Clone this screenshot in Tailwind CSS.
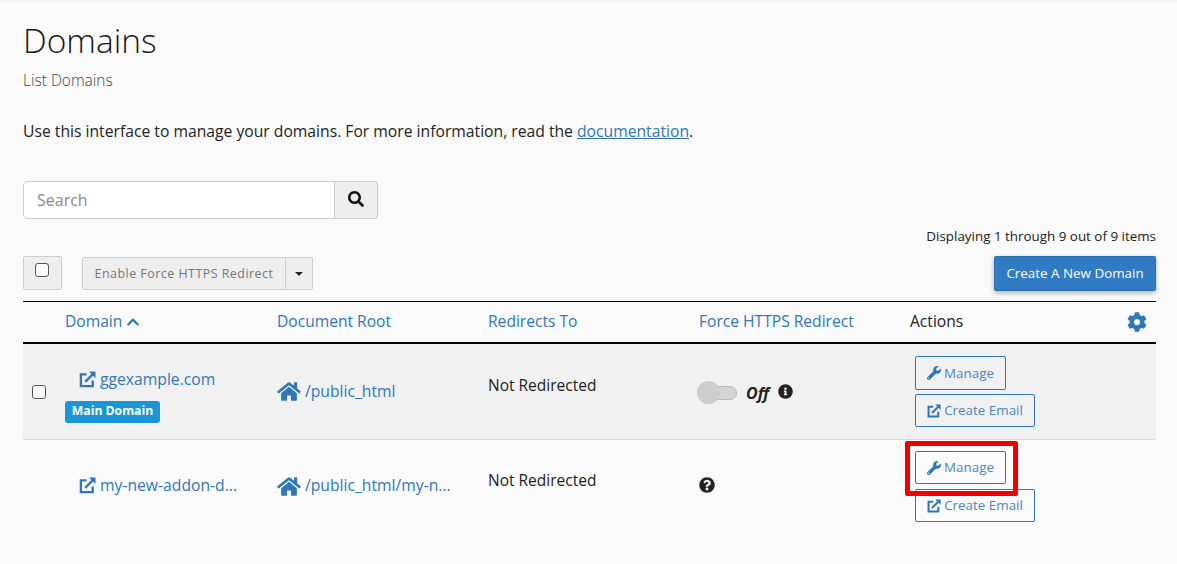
<!DOCTYPE html>
<html lang="en">
<head>
  <meta charset="UTF-8" />
  <title>Domains</title>
  <script src="https://cdn.jsdelivr.net/npm/@tailwindcss/browser@4"></script>
</head>
<body class="bg-[#fafafa] text-[#1f1f1f] font-['Open_Sans',sans-serif] overflow-hidden">
  <div class="h-[564px] w-[1177px] border-t-2 border-[#f3f3f3] pl-[23px] pr-[21px] relative">
    <!-- Page header -->
    <h1 class="pt-[16px] text-[33.5px] leading-[44px] font-light text-[#1a1a1a]">Domains</h1>
    <p class="mt-[8px] text-[15.5px] leading-[20px] font-light text-[#444]">List Domains</p>
    <p class="mt-[30px] text-[15.7px] leading-[22px] text-[#222]">Use this interface to manage your domains. For more information, read the <a class="text-[#2f77b8] underline">documentation</a>.</p>

    <!-- Search -->
    <div class="mt-[39px] flex w-[355px] h-[38px]">
      <div class="flex-1 flex items-center pl-[13px] text-[16px] text-[#8a8a8a] bg-white border border-[#ccc] rounded-l-[4px]">Search</div>
      <div class="w-[43px] flex items-center justify-center bg-[#eeeeee] border border-l-0 border-[#ccc] rounded-r-[4px]">
        <svg viewBox="0 0 512 512" class="w-[16px] h-[16px] fill-[#111] -mt-[2px]"><path d="M505 442.7L405.3 343c-4.5-4.5-10.6-7-17-7H372c27.6-35.3 44-79.7 44-128C416 93.1 322.9 0 208 0S0 93.1 0 208s93.1 208 208 208c48.3 0 92.7-16.4 128-44v16.3c0 6.4 2.5 12.5 7 17l99.7 99.7c9.4 9.4 24.6 9.4 33.9 0l28.3-28.3c9.4-9.4 9.4-24.6.1-34zM208 336c-70.7 0-128-57.2-128-128 0-70.7 57.2-128 128-128 70.7 0 128 57.2 128 128 0 70.7-57.2 128-128 128z"/></svg>
      </div>
    </div>

    <!-- Toolbar -->
    <p class="mt-[8px] text-right text-[13.4px] leading-[18px] text-[#222]">Displaying 1 through 9 out of 9 items</p>
    <div class="mt-[11px] flex items-start h-[35px]">
      <div class="w-[39px] h-[34px] pl-[11px] pt-[6px] bg-[#eeeeee] border border-[#ccc] rounded-[2px]">
        <span class="block w-[14px] h-[14px] bg-white border border-[#555] rounded-[3px]"></span>
      </div>
      <div class="ml-[20px] h-[33px] mt-[1px] flex bg-[#eeeeee] border border-[#ccc] rounded-[2px] text-[#777] text-[12.5px]">
        <span class="w-[202px] pt-[1px] flex items-center justify-center tracking-[0.45px]">Enable Force HTTPS Redirect</span>
        <span class="w-[27px] flex items-center justify-center border-l border-[#ccc]"><span class="border-x-[4px] border-x-transparent border-t-[4px] border-t-[#222]"></span></span>
      </div>
      <button class="ml-auto w-[162px] h-[35px] bg-[#2f7bc4] border border-[#2a6fb0] rounded-[2px] text-white text-[13.4px] font-medium shadow-[0_2px_5px_rgba(0,0,0,0.3)]">Create A New Domain</button>
    </div>

    <!-- Table -->
    <div class="mt-[10px] border-t border-black">
      <div class="grid grid-cols-[43px_211px_211px_211px_211px_1fr] h-[42px] items-center border-b-2 border-black text-[15.6px] text-[#2f77b8]">
        <span></span>
        <span class="flex items-center gap-[4px] -ml-[1px]">Domain
          <svg viewBox="0 0 448 512" class="w-[14px] h-[14px] fill-[#2f77b8]"><path d="M240.971 130.524l194.343 194.343c9.373 9.373 9.373 24.569 0 33.941l-22.667 22.667c-9.357 9.357-24.522 9.375-33.901.04L224 227.495 69.255 381.516c-9.379 9.335-24.544 9.317-33.901-.04l-22.667-22.667c-9.373-9.373-9.373-24.569 0-33.941L207.03 130.525c9.372-9.373 24.568-9.373 33.941-.001z"/></svg>
        </span>
        <span>Document Root</span>
        <span>Redirects To</span>
        <span>Force HTTPS Redirect</span>
        <span class="flex items-center justify-between text-[#222]">Actions
          <svg viewBox="0 0 512 512" class="w-[20px] h-[20px] mr-[9px] fill-[#2f77b8]"><path d="M487.4 315.7l-42.6-24.6c4.3-23.2 4.3-47 0-70.2l42.6-24.6c4.9-2.8 7.1-8.6 5.5-14-11.1-35.6-30-67.8-54.7-94.6-3.8-4.1-10-5.1-14.8-2.3L380.8 110c-17.9-15.4-38.5-27.3-60.8-35.1V25.8c0-5.6-3.9-10.5-9.4-11.7-36.7-8.2-74.3-7.8-109.2 0-5.5 1.2-9.4 6.1-9.4 11.7V75c-22.2 7.9-42.8 19.8-60.8 35.1L88.7 85.5c-4.9-2.8-11-1.9-14.8 2.3-24.7 26.7-43.6 58.9-54.7 94.6-1.7 5.4.6 11.2 5.5 14L67.3 221c-4.3 23.2-4.3 47 0 70.2l-42.6 24.6c-4.9 2.8-7.1 8.6-5.5 14 11.1 35.6 30 67.8 54.7 94.6 3.8 4.1 10 5.1 14.8 2.3l42.6-24.6c17.9 15.4 38.5 27.3 60.8 35.1v49.2c0 5.6 3.9 10.5 9.4 11.7 36.7 8.2 74.3 7.8 109.2 0 5.5-1.2 9.4-6.1 9.4-11.7v-49.2c22.2-7.9 42.8-19.8 60.8-35.1l42.6 24.6c4.9 2.8 11 1.9 14.8-2.3 24.7-26.7 43.6-58.9 54.7-94.6 1.5-5.5-.7-11.3-5.6-14.1zM256 336c-44.1 0-80-35.9-80-80s35.9-80 80-80 80 35.9 80 80-35.9 80-80 80z"/></svg>
        </span>
      </div>

      <!-- Row 1 -->
      <div class="grid grid-cols-[43px_211px_211px_211px_211px_1fr] h-[96px] bg-[#f1f1f1] border-b border-[#ddd]">
        <div class="flex items-center pl-[9px]"><span class="w-[14px] h-[14px] bg-white border border-[#555] rounded-[3px]"></span></div>
        <div class="-ml-[2px] flex flex-col pt-[25px]">
          <a class="ml-[15px] flex items-center gap-[4px] text-[15.7px] leading-[21px] text-[#2f77b8]">
            <svg viewBox="0 0 18 18" class="w-[17px] h-[17px] fill-none stroke-[#2f77b8] stroke-[2.5]"><path d="M8 3.5H2V16H14.5V10"/><path d="M6.5 11.5L14.5 3.5"/><path d="M10.5 0.5H17.5V7.5Z" class="fill-[#2f77b8] stroke-0"/></svg>
            ggexample.com</a>
          <span class="mt-[11px] ml-[1px] w-[95px] h-[22px] pb-[1px] flex items-center justify-center bg-[#1a96d4] rounded-[3px] text-white text-[12.2px] font-bold">Main Domain</span>
        </div>
        <div class="flex items-center gap-[4px] text-[#2f77b8] text-[15.7px]">
          <svg viewBox="0 0 576 512" class="w-[24px] h-[21px] fill-[#2f77b8]"><path d="M280.37 148.26L96 300.11V464a16 16 0 0 0 16 16l112.06-.29a16 16 0 0 0 15.92-16V368a16 16 0 0 1 16-16h64a16 16 0 0 1 16 16v95.64a16 16 0 0 0 16 16.05L464 480a16 16 0 0 0 16-16V300L295.67 148.26a12.19 12.19 0 0 0-15.3 0zM571.6 251.47L488 182.56V44.05a12 12 0 0 0-12-12h-56a12 12 0 0 0-12 12v72.61L318.47 43a48 48 0 0 0-61 0L4.34 251.47a12 12 0 0 0-1.6 16.9l25.5 31A12 12 0 0 0 45.15 301l235.22-193.74a12.19 12.19 0 0 1 15.3 0L530.9 301a12 12 0 0 0 16.9-1.6l25.5-31a12 12 0 0 0-1.7-16.93z"/></svg>
          /public_html</div>
        <div class="pt-[30px] text-[15.5px] leading-[22px] text-[#222]">Not Redirected</div>
        <div class="flex items-center -ml-[2px] pt-[2px]">
          <span class="relative w-[40px] h-[23px] flex items-center">
            <span class="w-full h-[14px] bg-[#d4d4d4] border border-[#bbb] rounded-full"></span>
            <span class="absolute left-0 top-0 w-[23px] h-[23px] bg-[#cdcdcd] rounded-full"></span>
          </span>
          <span class="ml-[9px] text-[16px] font-bold italic text-[#222]">Off</span>
          <svg viewBox="0 0 512 512" class="ml-[9px] -mt-[2px] w-[15px] h-[15px] fill-[#222]"><path d="M256 8C119.043 8 8 119.083 8 256c0 136.997 111.043 248 248 248s248-111.003 248-248C504 119.083 392.957 8 256 8zm0 110c23.196 0 42 18.804 42 42s-18.804 42-42 42-42-18.804-42-42 18.804-42 42-42zm56 254c0 6.627-5.373 12-12 12h-88c-6.627 0-12-5.373-12-12v-24c0-6.627 5.373-12 12-12h12v-64h-12c-6.627 0-12-5.373-12-12v-24c0-6.627 5.373-12 12-12h64c6.627 0 12 5.373 12 12v100h12c6.627 0 12 5.373 12 12v24z"/></svg>
        </div>
        <div class="pl-[5px] pt-[12px] flex flex-col items-start gap-[4px]">
          <a class="w-[91px] h-[34px] flex items-center justify-center gap-[3px] border border-[#2f77b8] rounded-[2px] text-[13.4px] text-[#4a85bd]">
            <svg viewBox="0 0 512 512" class="w-[14px] h-[14px] fill-[#2f77b8]"><path d="M507.73 109.1c-2.24-9.03-13.54-12.09-20.12-5.51l-74.36 74.36-67.88-11.31-11.31-67.88 74.36-74.36c6.62-6.62 3.43-17.9-5.66-20.16-47.38-11.74-99.55.91-136.58 37.93-39.64 39.64-50.55 97.1-34.05 147.2L18.74 402.76c-24.99 24.99-24.99 65.51 0 90.5 24.99 24.99 65.51 24.99 90.5 0l213.21-213.21c50.12 16.71 107.47 5.68 147.37-34.22 37.07-37.07 49.7-89.32 37.91-136.73zM64 472c-13.25 0-24-10.75-24-24 0-13.26 10.75-24 24-24s24 10.74 24 24c0 13.25-10.75 24-24 24z"/></svg>
            Manage</a>
          <a class="w-[120px] h-[33px] flex items-center justify-center gap-[3px] border border-[#2f77b8] rounded-[2px] text-[13.4px] text-[#4a85bd]">
            <svg viewBox="0 0 18 18" class="w-[14px] h-[14px] fill-none stroke-[#2f77b8] stroke-[2.6]"><path d="M8 3.5H2V16H14.5V10"/><path d="M6.5 11.5L14.5 3.5"/><path d="M10.5 0.5H17.5V7.5Z" class="fill-[#2f77b8] stroke-0"/></svg>
            Create Email</a>
        </div>
      </div>

      <!-- Row 2 -->
      <div class="grid grid-cols-[43px_211px_211px_211px_211px_1fr] h-[92px]">
        <div></div>
        <div class="-ml-[2px] flex items-center">
          <a class="ml-[15px] flex items-center gap-[4px] text-[15.7px] text-[#2f77b8]">
            <svg viewBox="0 0 18 18" class="w-[17px] h-[17px] fill-none stroke-[#2f77b8] stroke-[2.5]"><path d="M8 3.5H2V16H14.5V10"/><path d="M6.5 11.5L14.5 3.5"/><path d="M10.5 0.5H17.5V7.5Z" class="fill-[#2f77b8] stroke-0"/></svg>
            my-new-addon-d...</a>
        </div>
        <div class="flex items-center gap-[4px] text-[#2f77b8] text-[15.7px]">
          <svg viewBox="0 0 576 512" class="w-[24px] h-[21px] fill-[#2f77b8]"><path d="M280.37 148.26L96 300.11V464a16 16 0 0 0 16 16l112.06-.29a16 16 0 0 0 15.92-16V368a16 16 0 0 1 16-16h64a16 16 0 0 1 16 16v95.64a16 16 0 0 0 16 16.05L464 480a16 16 0 0 0 16-16V300L295.67 148.26a12.19 12.19 0 0 0-15.3 0zM571.6 251.47L488 182.56V44.05a12 12 0 0 0-12-12h-56a12 12 0 0 0-12 12v72.61L318.47 43a48 48 0 0 0-61 0L4.34 251.47a12 12 0 0 0-1.6 16.9l25.5 31A12 12 0 0 0 45.15 301l235.22-193.74a12.19 12.19 0 0 1 15.3 0L530.9 301a12 12 0 0 0 16.9-1.6l25.5-31a12 12 0 0 0-1.7-16.93z"/></svg>
          /public_html/my-n...</div>
        <div class="pt-[29px] text-[15.5px] leading-[22px] text-[#222]">Not Redirected</div>
        <div class="flex items-center pb-[2px]">
          <svg viewBox="0 0 512 512" class="w-[16px] h-[16px] fill-[#222]"><path d="M504 256c0 136.997-111.043 248-248 248S8 392.997 8 256C8 119.083 119.043 8 256 8s248 111.083 248 248zM262.655 90c-54.497 0-89.255 22.957-116.549 63.758-3.536 5.286-2.353 12.415 2.715 16.258l34.699 26.31c5.205 3.947 12.621 3.008 16.665-2.122 17.864-22.658 30.113-35.797 57.303-35.797 20.429 0 45.698 13.148 45.698 32.958 0 14.976-12.363 22.667-32.534 33.976C247.128 238.528 216 254.941 216 296v4c0 6.627 5.373 12 12 12h56c6.627 0 12-5.373 12-12v-1.333c0-28.462 83.186-29.647 83.186-106.667 0-58.002-60.165-102-116.531-102zM256 338c-25.365 0-46 20.635-46 46 0 25.364 20.635 46 46 46s46-20.636 46-46c0-25.365-20.635-46-46-46z"/></svg>
        </div>
        <div class="relative pl-[5px] pt-[11px] flex flex-col items-start gap-[5px]">
          <a class="w-[91px] h-[33px] flex items-center justify-center gap-[3px] border border-[#2f77b8] rounded-[2px] text-[13.4px] text-[#4a85bd]">
            <svg viewBox="0 0 512 512" class="w-[14px] h-[14px] fill-[#2f77b8]"><path d="M507.73 109.1c-2.24-9.03-13.54-12.09-20.12-5.51l-74.36 74.36-67.88-11.31-11.31-67.88 74.36-74.36c6.62-6.62 3.43-17.9-5.66-20.16-47.38-11.74-99.55.91-136.58 37.93-39.64 39.64-50.55 97.1-34.05 147.2L18.74 402.76c-24.99 24.99-24.99 65.51 0 90.5 24.99 24.99 65.51 24.99 90.5 0l213.21-213.21c50.12 16.71 107.47 5.68 147.37-34.22 37.07-37.07 49.7-89.32 37.91-136.73zM64 472c-13.25 0-24-10.75-24-24 0-13.26 10.75-24 24-24s24 10.74 24 24c0 13.25-10.75 24-24 24z"/></svg>
            Manage</a>
          <a class="w-[120px] h-[33px] flex items-center justify-center gap-[3px] border border-[#2f77b8] rounded-[2px] text-[13.4px] text-[#4a85bd]">
            <svg viewBox="0 0 18 18" class="w-[14px] h-[14px] fill-none stroke-[#2f77b8] stroke-[2.6]"><path d="M8 3.5H2V16H14.5V10"/><path d="M6.5 11.5L14.5 3.5"/><path d="M10.5 0.5H17.5V7.5Z" class="fill-[#2f77b8] stroke-0"/></svg>
            Create Email</a>
          <!-- Red highlight drawn over the screenshot -->
          <span class="absolute left-[-5px] top-[1px] w-[113px] h-[55px] border-[5px] border-[#f00000] rounded-[2px]"></span>
        </div>
      </div>
    </div>
  </div>
</body>
</html>
